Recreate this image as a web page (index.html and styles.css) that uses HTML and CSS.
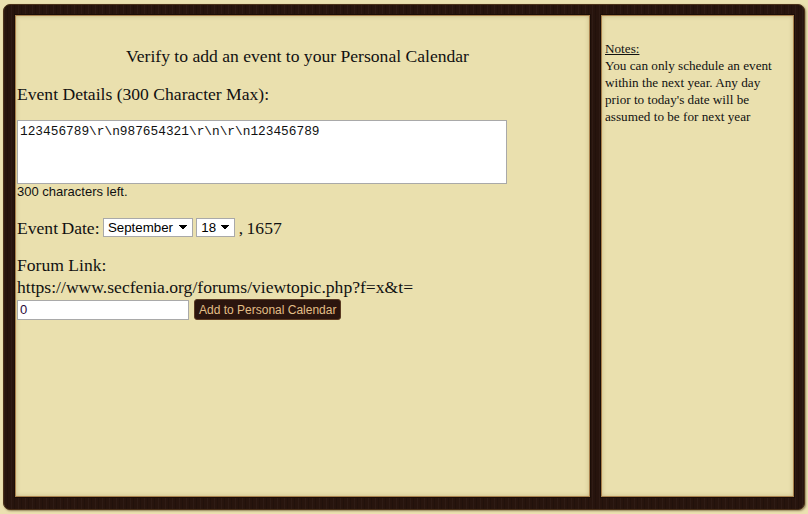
FILE: index.html
```html
<!DOCTYPE html>
<html lang="en">
<head>
  <meta charset="UTF-8">
  <title>Personal Calendar</title>
  <link rel="stylesheet" href="styles.css">
</head>
<body>

  <div class="frame">
    <div class="panel main">
      <div class="title">Verify to add an event to your Personal Calendar</div>

      <div class="label">Event Details (300 Character Max):</div>
      <textarea class="details">123456789\r\n987654321\r\n\r\n123456789</textarea>
      <div class="counter">300 characters left.</div>

      <div class="date-row">
        Event Date:
        <select class="sel month"><option>September</option></select>
        <select class="sel day"><option>18</option></select>
        , 1657
      </div>

      <div class="label link-label">Forum Link:</div>
      <div class="label url">https://www.secfenia.org/forums/viewtopic.php?f=x&amp;t=</div>
      <div class="link-row">
        <input class="topic" type="text" value="0">
        <button class="add">Add to Personal Calendar</button>
      </div>
    </div>

    <div class="panel side">
      <div class="notes-head">Notes:</div>
      <div class="notes">You can only schedule an event within the next year. Any day prior to today's date will be assumed to be for next year</div>
    </div>
  </div>

</body>
</html>
```

FILE: styles.css
```css
body {
  margin: 0;
  background-color: #ebe1b0;
  font-family: "Liberation Serif", serif;
  color: #111;
}
.frame {
  margin: 4px 3px;
  height: 506px;
  box-sizing: border-box;
  padding: 9px 9px 11px 10px;
  display: flex;
  gap: 9px;
  border-radius: 7px;
  border: 1px solid #4b3119;
  background-color: #27140d;
  background-image: repeating-linear-gradient(90deg, rgba(255,255,255,0.03) 0 1px, transparent 1px 3px, rgba(0,0,0,0.15) 3px 4px, transparent 4px 7px);
  box-shadow: 1px 1px 2px rgba(60,40,10,0.5);
}
.panel {
  box-sizing: border-box;
  border: 1px solid #1b0d07;
  outline: 1px solid #a8804c;
  outline-offset: -2px;
  background-color: #eae0ae;
  box-shadow: inset 0 0 5px rgba(120,95,40,0.45);
}
.main {
  width: 577px;
  padding: 31px 4px 0 2px;
  font-size: 17.6px;
}
.side {
  flex: 1;
  padding: 25px 4px 0 4px;
  font-size: 13.2px;
  line-height: 17px;
}
.notes {
  width: 172px;
}
.title {
  text-align: center;
  margin-left: -8px;
  line-height: 20px;
}
.label {
  line-height: 22px;
}
.main > .label:nth-child(2) {
  margin-top: 17px;
}
.details {
  display: block;
  margin-top: 15px;
  width: 490px;
  height: 64px;
  box-sizing: border-box;
  border: 1px solid #a9a9a9;
  padding: 3px 2px;
  font-family: "Liberation Mono", monospace;
  font-size: 12.8px;
  resize: none;
  color: #111;
}
.counter {
  font-family: "Liberation Sans", sans-serif;
  font-size: 13px;
  line-height: 16px;
}
.date-row {
  margin-top: 17px;
  line-height: 22px;
  word-spacing: -1px;
}
.sel {
  appearance: none;
  font-family: "Liberation Sans", sans-serif;
  font-size: 13.3px;
  height: 19px;
  padding: 0 18px 0 4px;
  border: 1px solid #a9a9a9;
  background-color: #fff;
  background-image: linear-gradient(45deg, transparent 50%, #000 50%), linear-gradient(135deg, #000 50%, transparent 50%);
  background-size: 4px 5px, 4px 5px;
  background-position: right 9px center, right 5px center;
  background-repeat: no-repeat;
  color: #000;
  vertical-align: 2px;
  word-spacing: 0;
}
.month {
  width: 90px;
}
.day {
  width: 39px;
}
.link-label {
  margin-top: 15px;
}
.link-row {
  display: flex;
  align-items: center;
  gap: 5px;
  margin-top: 1px;
}
.topic {
  width: 172px;
  height: 20px;
  box-sizing: border-box;
  border: 1px solid #a9a9a9;
  padding: 1px 2px;
  font-family: "Liberation Sans", sans-serif;
  font-size: 13px;
  color: #2a0a3a;
}
.add {
  height: 21px;
  padding: 0 4px;
  font-family: "Liberation Sans", sans-serif;
  font-size: 12px;
  color: #e2bf88;
  background-color: #2b150e;
  border: 1px solid #5a3a22;
  border-radius: 3px;
}
.notes-head {
  text-decoration: underline;
}
```
